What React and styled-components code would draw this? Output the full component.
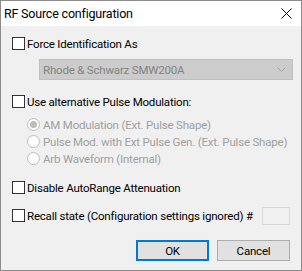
import React from "react";
import styled, { createGlobalStyle } from "styled-components";

const Global = createGlobalStyle`
  html, body { margin: 0; padding: 0; background: #ffffff; }
  * { box-sizing: border-box; }
`;

const Window = styled.div`
  width: 302px;
  height: 271px;
  border: 1px solid #8c8c8c;
  background: #f0f0f0;
  display: flex;
  flex-direction: column;
  font-family: Roboto, "Noto Sans", sans-serif;
  font-size: 11.5px;
  letter-spacing: -0.2px;
  color: #000;
`;

const TitleBar = styled.div`
  height: 25px;
  background: #ffffff;
  display: flex;
  align-items: center;
  justify-content: space-between;
  padding: 0 9px 0 3px;
`;

const Title = styled.span`
  font-size: 12.5px;
  line-height: 20px;
  color: #000;
`;

const Body = styled.div`
  flex: 1;
  display: flex;
  flex-direction: column;
  padding: 11px 11px 0 11px;
`;

const Row = styled.label`
  display: flex;
  align-items: center;
  height: 13px;
  margin-top: ${(p) => p.$mt || 0}px;
  margin-left: ${(p) => p.$indent || 0}px;
  color: ${(p) => (p.$disabled ? "#a0a0a0" : "#000")};
  white-space: nowrap;
`;

const Box = styled.span`
  width: 13px;
  height: 13px;
  border: 1px solid #333333;
  background: #ffffff;
  flex: none;
  margin-right: 2px;
`;

const Radio = styled.span`
  width: 13px;
  height: 13px;
  border-radius: 50%;
  border: 1px solid #bcbcbc;
  background: #ffffff;
  flex: none;
  margin-right: 3px;
  display: flex;
  align-items: center;
  justify-content: center;
  &::after {
    content: "";
    width: 7px;
    height: 7px;
    border-radius: 50%;
    background: ${(p) => (p.$checked ? "#bcbcbc" : "transparent")};
  }
`;

const Text = styled.span`
  line-height: 16px;
`;

const Combo = styled.div`
  margin-top: 9px;
  margin-left: 27px;
  width: 254px;
  height: 21px;
  background: #cccccc;
  border: 1px solid #bfbfbf;
  display: flex;
  align-items: center;
  justify-content: space-between;
  padding: 0 6px 0 3px;
  color: #838383;
`;

const Input = styled.span`
  margin-left: auto;
  width: 28px;
  height: 18px;
  flex: none;
  border: 1px solid #d9d9d9;
  background: #f0f0f0;
`;

const Buttons = styled.div`
  display: flex;
  justify-content: flex-end;
  gap: 8px;
  margin-top: 18px;
`;

const Button = styled.button`
  width: 73px;
  height: 21px;
  padding: 0;
  font: inherit;
  letter-spacing: inherit;
  color: #000;
  background: #e1e1e1;
  border: ${(p) => (p.$default ? "2px solid #0078d7" : "1px solid #adadad")};
`;

export default function App() {
  return (
    <>
      <Global />
      <Window>
        <TitleBar>
          <Title>RF Source configuration</Title>
          <svg width="11" height="11" viewBox="0 0 11 11">
            <path d="M0.5 0.5 L10.5 10.5 M10.5 0.5 L0.5 10.5" stroke="#000" strokeWidth="1" />
          </svg>
        </TitleBar>
        <Body>
          <Row>
            <Box />
            <Text>Force Identification As</Text>
          </Row>
          <Combo>
            <span>Rhode &amp; Schwarz SMW200A</span>
            <svg width="9" height="5" viewBox="0 0 9 5">
              <path d="M0.5 0.5 L4.5 4.5 L8.5 0.5" stroke="#a6a6a6" fill="none" />
            </svg>
          </Combo>
          <Row $mt={15}>
            <Box />
            <Text>Use alternative Pulse Modulation:</Text>
          </Row>
          <Row $mt={10} $indent={15} $disabled>
            <Radio $checked />
            <Text>AM Modulation (Ext. Pulse Shape)</Text>
          </Row>
          <Row $mt={4} $indent={15} $disabled>
            <Radio />
            <Text>Pulse Mod. with Ext Pulse Gen. (Ext. Pulse Shape)</Text>
          </Row>
          <Row $mt={4} $indent={15} $disabled>
            <Radio />
            <Text>Arb Waveform (Internal)</Text>
          </Row>
          <Row $mt={16}>
            <Box />
            <Text>Disable AutoRange Attenuation</Text>
          </Row>
          <Row $mt={15}>
            <Box />
            <Text>Recall state (Configuration settings ignored) #</Text>
            <Input />
          </Row>
          <Buttons>
            <Button $default>OK</Button>
            <Button>Cancel</Button>
          </Buttons>
        </Body>
      </Window>
    </>
  );
}
